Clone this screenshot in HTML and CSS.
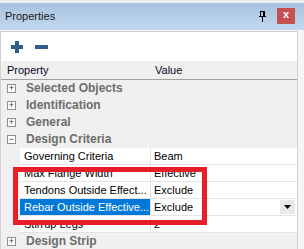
FILE: index.html
```html
<!DOCTYPE html>
<html>
<head>
	<meta charset="utf-8">
	<title>Properties</title>
	<link rel="stylesheet" href="styles.css">
</head>
<body>
	<div class="window">
		<div class="titlebar">
			<span class="title">Properties</span>
			<span class="pin">
				<svg width="7" height="11" viewBox="0 0 7 11">
					<rect x="0" y="5" width="7" height="1" fill="#000"/>
					<rect x="1" y="0" width="5" height="1" fill="#000"/>
					<rect x="1" y="0" width="1" height="5" fill="#000"/>
					<rect x="4" y="0" width="2" height="5" fill="#000"/>
					<rect x="3" y="6" width="1" height="5" fill="#000"/>
				</svg>
			</span>
			<span class="close">x</span>
		</div>

		<div class="panel">
			<div class="toolbar">
				<svg width="12" height="12" viewBox="0 0 12 12">
					<rect x="4" y="0" width="4" height="12" fill="#2f5f89"/>
					<rect x="0" y="4" width="12" height="4" fill="#2f5f89"/>
				</svg>
				<svg width="13" height="12" viewBox="0 0 13 12">
					<rect x="0" y="4" width="13" height="4" fill="#2f5f89"/>
				</svg>
			</div>

			<div class="header">
				<div class="hcell">Property</div>
				<div class="hcell val">Value</div>
			</div>

			<div class="grid">
				<div class="row cat"><span class="box">+</span>Selected Objects</div>
				<div class="row cat"><span class="box">+</span>Identification</div>
				<div class="row cat"><span class="box">+</span>General</div>
				<div class="row cat"><span class="box">&minus;</span>Design Criteria</div>

				<div class="row prop">
					<div class="name">Governing Criteria</div>
					<div class="value">Beam</div>
				</div>
				<div class="row prop">
					<div class="name">Max Flange Width</div>
					<div class="value">Effective</div>
				</div>
				<div class="row prop">
					<div class="name">Tendons Outside Effect...</div>
					<div class="value">Exclude</div>
				</div>
				<div class="row prop selected">
					<div class="name">Rebar Outside Effective...</div>
					<div class="value">Exclude<span class="drop">
						<svg width="7" height="4" viewBox="0 0 7 4"><path d="M0 0H7L3.5 4Z" fill="#000"/></svg>
					</span></div>
				</div>
				<div class="row prop">
					<div class="name">Stirrup Legs</div>
					<div class="value">2</div>
				</div>

				<div class="row cat"><span class="box">+</span>Design Strip</div>
			</div>

			<div class="mark"></div>
		</div>
	</div>
</body>
</html>
```

FILE: styles.css
```css
* {
	margin: 0;
	padding: 0;
	box-sizing: border-box;
}
body {
	font-family: "Liberation Sans", Arial, sans-serif;
	font-size: 11px;
	color: #000;
	background: #f0f0f0;
}
.window {
	width: 304px;
	height: 249px;
	overflow: hidden;
	background: #f5f5f5;
}

.titlebar {
	height: 31px;
	border-top: 3px solid #f0f0f0;
	border-bottom: 1px solid #f3f3f3;
	background: linear-gradient(#a7c1df, #c2d8ef);
	display: flex;
	align-items: center;
	padding-left: 5px;
	padding-right: 9px;
}
.title {
	flex: 1;
	color: #1a1a1a;
	font-size: 11px;
	margin-top: -2px;
}
.pin {
	display: flex;
	margin-right: 11px;
	margin-top: -1px;
}
.close {
	width: 18px;
	height: 16px;
	background: #c75050;
	color: #fff;
	font-weight: bold;
	font-size: 11px;
	line-height: 13px;
	text-align: center;
	margin-top: -1px;
}

.panel {
	position: relative;
	width: 298px;
	height: 218px;
	border: 1px solid #d0d0d0;
	border-bottom: 0;
	background: #fff;
}
.toolbar {
	height: 29px;
	display: flex;
	align-items: center;
	gap: 12px;
	padding-left: 10px;
	padding-top: 1px;
}

.header {
	display: grid;
	grid-template-columns: 150px 1fr;
	height: 19px;
	background: #efefef;
	border-bottom: 1px solid #a0a0a0;
	align-items: center;
}
.hcell {
	padding-left: 6px;
	color: #0a0a1e;
}
.hcell.val {
	padding-left: 4px;
}

.row {
	height: 17px;
	border-bottom: 1px solid #f0f0f0;
}
.cat {
	background: #f0f0f0;
	color: #6d6d6d;
	font-weight: bold;
	display: flex;
	align-items: center;
	padding-left: 6px;
	font-size: 12px;
}
.box {
	width: 9px;
	height: 9px;
	border: 1px solid #8e8f8f;
	background: #fff;
	color: #3c3c3c;
	font-size: 9px;
	line-height: 6px;
	font-weight: normal;
	text-align: center;
	margin-right: 10px;
}
.prop {
	display: grid;
	grid-template-columns: 131px 1fr;
	padding-left: 19px;
	background: #f0f0f0;
	border-bottom: 0;
}
.prop .name,
.prop .value {
	background: #fff;
	border-bottom: 1px solid #e3e3e3;
	padding-left: 4px;
	line-height: 16px;
	white-space: nowrap;
	overflow: hidden;
}
.prop .name {
	border-right: 1px solid #e3e3e3;
}
.prop .value {
	display: flex;
	justify-content: space-between;
	padding-left: 3px;
	padding-right: 2px;
}
.selected .name {
	background: #0078d7;
	color: #fff;
}
.drop {
	width: 15px;
	height: 14px;
	margin-top: 1px;
	background: #e8e8e8;
	display: flex;
	align-items: center;
	justify-content: center;
}

.mark {
	position: absolute;
	left: 12px;
	top: 135px;
	width: 194px;
	height: 58px;
	border: 5px solid #e71d2a;
}
```
